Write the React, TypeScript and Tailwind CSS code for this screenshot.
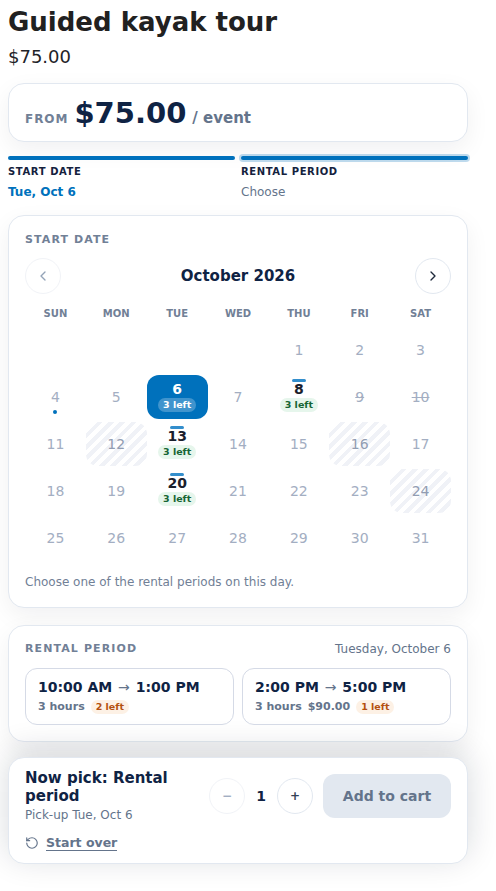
import { ChevronLeft, ChevronRight, RotateCcw } from 'lucide-react';

const weekdays = ['SUN', 'MON', 'TUE', 'WED', 'THU', 'FRI', 'SAT'];

type Day = {
  n?: number;
  kind?: 'selected' | 'open' | 'hatched' | 'struck' | 'dot';
};

const days: Day[] = [
  {}, {}, {}, {},
  { n: 1 }, { n: 2 }, { n: 3 },
  { n: 4, kind: 'dot' }, { n: 5 }, { n: 6, kind: 'selected' }, { n: 7 }, { n: 8, kind: 'open' }, { n: 9, kind: 'struck' }, { n: 10, kind: 'struck' },
  { n: 11 }, { n: 12, kind: 'hatched' }, { n: 13, kind: 'open' }, { n: 14 }, { n: 15 }, { n: 16, kind: 'hatched' }, { n: 17 },
  { n: 18 }, { n: 19 }, { n: 20, kind: 'open' }, { n: 21 }, { n: 22 }, { n: 23 }, { n: 24, kind: 'hatched' },
  { n: 25 }, { n: 26 }, { n: 27 }, { n: 28 }, { n: 29 }, { n: 30 }, { n: 31 },
];

function DayCell({ day }: { day: Day }) {
  if (!day.n) return <div className="h-11" />;

  if (day.kind === 'selected') {
    return (
      <div className="h-11 pt-1.5 rounded-xl bg-[#0071bc] flex flex-col items-center text-white">
        <span className="text-sm font-bold leading-4">{day.n}</span>
        <span className="mt-[0.5px] h-3.5 px-[4.5px] rounded-full bg-white/25 text-[9.5px] font-bold leading-[14px]">3 left</span>
      </div>
    );
  }

  if (day.kind === 'open') {
    return (
      <div className="relative h-11 pt-1.5 flex flex-col items-center">
        <span className="absolute top-1 w-3.5 h-[3px] rounded-sm bg-[#338ecc]" />
        <span className="text-sm font-bold leading-4 text-[#1a202c]">{day.n}</span>
        <span className="mt-[0.5px] h-3.5 px-[4.5px] rounded-full bg-[#e6f6ec] text-[#166534] text-[9.5px] font-bold leading-[14px]">3 left</span>
      </div>
    );
  }

  if (day.kind === 'hatched') {
    return (
      <div className="h-11 rounded-xl flex items-center justify-center text-sm text-[#929db2] bg-[repeating-linear-gradient(135deg,#f0f2f7_0,#f0f2f7_4px,#ffffff_4px,#ffffff_8px)]">
        {day.n}
      </div>
    );
  }

  return (
    <div className="relative h-11 flex items-center justify-center text-sm text-[#a3aec2]">
      <span className={day.kind === 'struck' ? 'line-through' : ''}>{day.n}</span>
      {day.kind === 'dot' && <span className="absolute bottom-[5px] w-1 h-1 rounded-full bg-[#0071bc]" />}
    </div>
  );
}

export default function App() {
  return (
    <main className="min-h-[891px] bg-white text-[#1f2328] font-['DejaVu_Sans',sans-serif] pl-2 w-[496px] overflow-hidden">
      <div className="w-[460px]">
        <h1 className="pt-[3px] text-[26px] font-bold leading-[38px] text-[#212121]">Guided kayak tour</h1>
        <p className="mt-[3px] text-lg leading-[26px]">$75.00</p>

        <div className="mt-[13px] h-[59px] px-4 rounded-2xl border border-[#e2e8f0] bg-white shadow-[0_8px_24px_rgba(15,23,42,0.06)] flex items-baseline pt-[11px]">
          <span className="text-xs font-bold tracking-[0.08em] text-[#718096]">FROM</span>
          <span className="ml-1.5 text-[29px] font-bold leading-9 text-[#0f2344]">$75.00</span>
          <span className="ml-1.5 text-[15px] font-bold text-[#64748b]">/ event</span>
        </div>

        <div className="mt-3.5 grid grid-cols-2 gap-1.5">
          <div>
            <div className="h-1 rounded-full bg-[#0071bc]" />
            <div className="mt-[5px] text-[10px] font-bold tracking-[0.06em] leading-[14px] text-[#14213d]">START DATE</div>
            <div className="mt-[6px] text-xs font-bold leading-[14px] text-[#0071bc]">Tue, Oct 6</div>
          </div>
          <div>
            <div className="h-1 rounded-full bg-[#0071bc] ring-2 ring-[#0071bc]/25" />
            <div className="mt-[5px] text-[10px] font-bold tracking-[0.06em] leading-[14px] text-[#14213d]">RENTAL PERIOD</div>
            <div className="mt-[6px] text-xs leading-[14px] text-[#64748b]">Choose</div>
          </div>
        </div>

        <section className="mt-4 h-[393px] px-4 pt-[17px] rounded-2xl border border-[#e2e8f0] bg-white shadow-[0_8px_24px_rgba(15,23,42,0.06)]">
          <div className="text-[11px] font-bold tracking-[0.1em] leading-[14px] text-[#718096]">START DATE</div>
          <div className="mt-[11px] flex items-center justify-between">
            <button className="w-9 h-9 rounded-full border border-[#f1f3f7] flex items-center justify-center text-[#94a3b8]">
              <ChevronLeft size={16} />
            </button>
            <span className="text-[15px] font-bold text-[#0f2344]">October 2026</span>
            <button className="w-9 h-9 rounded-full border border-[#e2e8f0] flex items-center justify-center text-[#1e293b]">
              <ChevronRight size={16} />
            </button>
          </div>
          <div className="mt-3 grid grid-cols-7">
            {weekdays.map((d) => (
              <div key={d} className="text-center text-[10px] font-bold leading-[16px] text-[#718096]">{d}</div>
            ))}
          </div>
          <div className="mt-[6px] grid grid-cols-7 gap-y-[3px]">
            {days.map((day, i) => (
              <DayCell key={i} day={day} />
            ))}
          </div>
          <p className="mt-[13px] text-xs leading-[18px] text-[#718096]">Choose one of the rental periods on this day.</p>
        </section>

        <section className="mt-[17px] h-[117px] px-4 pt-4 rounded-2xl border border-[#e2e8f0] bg-white shadow-[0_8px_24px_rgba(15,23,42,0.06)]">
          <div className="flex items-center justify-between h-[14px]">
            <span className="text-[11px] font-bold tracking-[0.1em] text-[#718096]">RENTAL PERIOD</span>
            <span className="text-xs text-[#64748b]">Tuesday, October 6</span>
          </div>
          <div className="mt-[12px] grid grid-cols-2 gap-2">
            <div className="h-[57px] px-3 rounded-xl border border-[#d5dae6] pt-[9px]">
              <div className="text-sm font-bold leading-[18px] text-[#0f2344]">
                10:00 AM <span className="mx-px font-normal text-[#64748b]">→</span> 1:00 PM
              </div>
              <div className="mt-[3px] flex items-center gap-1.5 text-[11px] font-bold text-[#64748b]">
                <span>3 hours</span>
                <span className="h-3.5 px-[5px] rounded-full bg-[#fdf1e5] text-[#b4500f] text-[9.5px] leading-[14px]">2 left</span>
              </div>
            </div>
            <div className="h-[57px] px-3 rounded-xl border border-[#d5dae6] pt-[9px]">
              <div className="text-sm font-bold leading-[18px] text-[#0f2344]">
                2:00 PM <span className="mx-px font-normal text-[#64748b]">→</span> 5:00 PM
              </div>
              <div className="mt-[3px] flex items-center gap-1.5 text-[11px] font-bold text-[#64748b]">
                <span>3 hours</span>
                <span>$90.00</span>
                <span className="h-3.5 px-[5px] rounded-full bg-[#fdf1e5] text-[#b4500f] text-[9.5px] leading-[14px]">1 left</span>
              </div>
            </div>
          </div>
        </section>

        <section className="mt-[15px] h-[107px] px-4 pt-[10px] rounded-2xl border border-[#e2e8f0] bg-white shadow-[0_-6px_32px_rgba(15,23,42,0.16)]">
          <div className="flex items-center">
            <div className="w-[184px] pt-px">
              <div className="w-[160px] text-[15px] font-bold leading-[18px] text-[#0f2344]">Now pick: Rental period</div>
              <div className="mt-px text-xs leading-[18px] text-[#64748b]">Pick-up Tue, Oct 6</div>
            </div>
            <button className="w-9 h-9 rounded-full border border-[#f1f3f7] text-[#a3aec2] text-xs font-bold">−</button>
            <span className="w-8 text-center text-sm font-bold text-[#0f2344]">1</span>
            <button className="w-9 h-9 rounded-full border border-[#e2e8f0] text-[#334155] text-xs font-bold">+</button>
            <button className="ml-2.5 w-32 h-11 rounded-xl bg-[#e2e8f0] text-sm font-bold text-[#64748b]">Add to cart</button>
          </div>
          <div className="mt-[11px] flex items-center gap-[7px] text-[#64748b]">
            <RotateCcw size={14} />
            <span className="text-[12.5px] font-bold border-b border-[#64748b] leading-[15px]">Start over</span>
          </div>
        </section>
      </div>
    </main>
  );
}
